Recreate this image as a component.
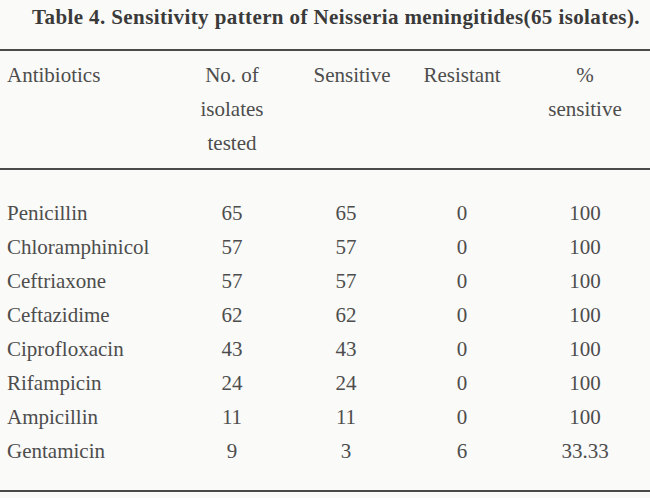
const rows: [string, string, string, string, string][] = [
  ["Penicillin", "65", "65", "0", "100"],
  ["Chloramphinicol", "57", "57", "0", "100"],
  ["Ceftriaxone", "57", "57", "0", "100"],
  ["Ceftazidime", "62", "62", "0", "100"],
  ["Ciprofloxacin", "43", "43", "0", "100"],
  ["Rifampicin", "24", "24", "0", "100"],
  ["Ampicillin", "11", "11", "0", "100"],
  ["Gentamicin", "9", "3", "6", "33.33"],
];

const cols = "grid grid-cols-[180px_104px_130px_96px_140px]";

export default function App() {
  return (
    <div className="w-[650px] h-[498px] overflow-hidden bg-[#fafaf8] text-[#4d4d4d] font-['Liberation_Serif',serif]">
      <h1 className="pt-[5px] text-center text-[21px] leading-[24px] tracking-[0.4px] font-bold text-[#3a3a3a] pl-[22px]">
        Table 4. Sensitivity pattern of Neisseria meningitides(65 isolates).
      </h1>

      <div className="mt-[20px] h-[2px] bg-[#4a4a4a]" />

      {/* header */}
      <div className={`${cols} pt-[7px] pb-[8px] text-[21px] leading-[34px]`}>
        <div className="pl-[7px]">Antibiotics</div>
        <div className="text-center">
          No. of
          <br />
          isolates
          <br />
          tested
        </div>
        <div className="text-center pl-[6px]">Sensitive</div>
        <div className="text-center">Resistant</div>
        <div className="text-center pl-[10px]">
          %
          <br />
          sensitive
        </div>
      </div>

      <div className="h-[2px] bg-[#4a4a4a]" />

      {/* body */}
      <div className="pt-[26px] pb-[22px] text-[21px] leading-[34px]">
        {rows.map(([name, tested, sens, res, pct]) => (
          <div key={name} className={cols}>
            <div className="pl-[7px]">{name}</div>
            <div className="text-center">{tested}</div>
            <div className="text-center pr-[6px]">{sens}</div>
            <div className="text-center">{res}</div>
            <div className="text-center pl-[10px]">{pct}</div>
          </div>
        ))}
      </div>

      <div className="h-[2px] bg-[#4a4a4a]" />
    </div>
  );
}
